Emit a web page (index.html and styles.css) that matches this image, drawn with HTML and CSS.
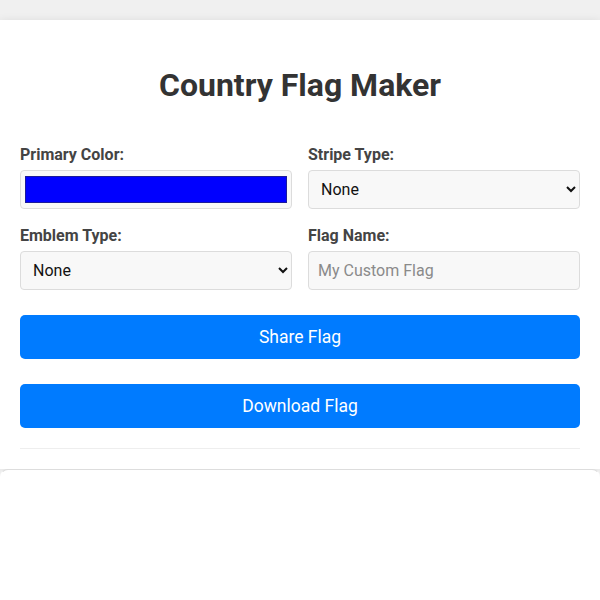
FILE: index.html
```html
<!DOCTYPE html>
<html lang="en">
<head>
<meta charset="utf-8">
<title>Country Flag Maker</title>
<link rel="stylesheet" href="styles.css">
</head>
<body>
<main class="container">
  <h1 class="title">Country Flag Maker</h1>
  <div class="controls">
    <div class="field">
      <label class="label" for="primary">Primary Color:</label>
      <input class="color-input" id="primary" type="color" value="#0000ff">
    </div>
    <div class="field">
      <label class="label" for="stripe">Stripe Type:</label>
      <select class="select" id="stripe">
        <option>None</option>
        <option>Horizontal</option>
        <option>Vertical</option>
      </select>
    </div>
    <div class="field">
      <label class="label" for="emblem">Emblem Type:</label>
      <select class="select" id="emblem">
        <option>None</option>
        <option>Star</option>
        <option>Circle</option>
      </select>
    </div>
    <div class="field">
      <label class="label" for="name">Flag Name:</label>
      <input class="text-input" id="name" type="text" placeholder="My Custom Flag">
    </div>
  </div>
  <div class="actions">
    <button class="btn" type="button">Share Flag</button>
    <button class="btn" type="button">Download Flag</button>
  </div>
  <div class="divider"></div>
</main>
<section class="preview"></section>
</body>
</html>
```
FILE: styles.css
```css
* { box-sizing: border-box; }
html, body { margin: 0; }
body {
  background: #f0f0f0;
  padding-top: 20px;
  font-family: Roboto, "Liberation Sans", Arial, sans-serif;
  color: #333;
}
.container {
  background: #fff;
  padding: 20px 20px 20px;
  box-shadow: 0 0 8px rgba(0, 0, 0, 0.08);
}
.title {
  margin: 26px 0 42px;
  font-size: 32px;
  line-height: 38px;
  font-weight: 700;
  text-align: center;
  color: #333;
}
.controls {
  display: grid;
  grid-template-columns: 1fr 1fr;
  column-gap: 16px;
  row-gap: 18px;
}
.field { display: flex; flex-direction: column; }
.label {
  display: block;
  font-size: 16px;
  line-height: 18px;
  font-weight: 700;
  color: #444;
  margin-bottom: 6px;
}
.color-input,
.select,
.text-input {
  width: 100%;
  height: 39px;
  background: #f8f8f8;
  border: 1px solid #dcdcdc;
  border-radius: 4px;
  font-family: Roboto, "Liberation Sans", Arial, sans-serif;
  font-size: 16px;
  color: #111;
  margin: 0;
}
.color-input {
  padding: 5px 4px;
  cursor: pointer;
}
.color-input::-webkit-color-swatch-wrapper { padding: 0; }
.color-input::-webkit-color-swatch {
  border: 1px solid #1a1a9a;
  border-radius: 0;
}
.select { padding: 0 8px; }
.text-input { padding: 0 9px; }
.text-input::placeholder { color: #8a8a8a; }
.actions {
  display: flex;
  flex-direction: column;
  gap: 25px;
  margin-top: 25px;
}
.btn {
  height: 44px;
  border: none;
  border-radius: 5px;
  background: #007bff;
  color: #fff;
  font-family: Roboto, "Liberation Sans", Arial, sans-serif;
  font-size: 17.5px;
  cursor: pointer;
}
.divider {
  height: 21px;
  border-bottom: 1px solid #eeeeee;
}
.preview {
  background: #fff;
  border: 1px solid;
  border-color: #dddddd transparent transparent;
  border-radius: 8px;
  min-height: 140px;
}
```
